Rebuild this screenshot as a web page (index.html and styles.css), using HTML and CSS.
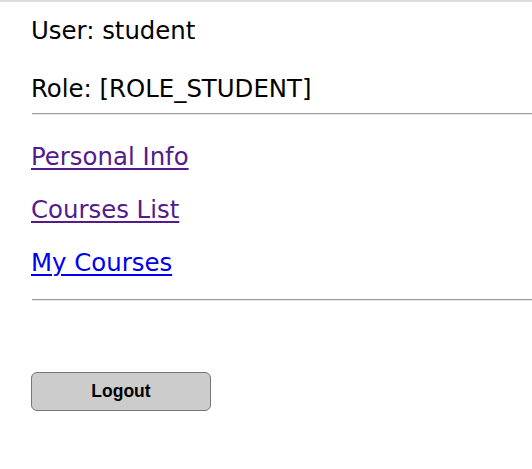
FILE: index.html
```html
<!DOCTYPE html>
<html>
<head>
<meta charset="utf-8">
<link rel="stylesheet" href="styles.css">
</head>
<body>
<div class="page">
  <p class="info user">User: student</p>
  <p class="info role">Role: [ROLE_STUDENT]</p>
  <hr class="rule rule-top">
  <nav class="links">
    <a class="link visited" href="#personal">Personal Info</a>
    <a class="link visited" href="#courses">Courses List</a>
    <a class="link" href="#my">My Courses</a>
  </nav>
  <hr class="rule rule-bottom">
  <form class="logout-form">
    <button type="button" class="logout">Logout</button>
  </form>
</div>
</body>
</html>
```
FILE: styles.css
```css
html, body {
  margin: 0;
  padding: 0;
  background: #fff;
}
body {
  border-top: 2px solid #dcdcdc;
  font-family: "DejaVu Sans", Verdana, sans-serif;
  font-size: 24.4px;
  line-height: 29px;
  color: #000;
}
.page {
  padding: 14px 0 0 31px;
}
.info {
  margin: 0;
}
.role {
  margin-top: 29px;
}
.rule {
  margin: 0 0 0 1px;
  height: 0;
  border: 0;
  border-top: 1px solid #9c9c9c;
  border-bottom: 1px solid #e6e6e6;
}
.rule-top {
  margin-top: 10px;
}
.links {
  display: flex;
  flex-direction: column;
  align-items: flex-start;
  gap: 24px;
  padding-top: 27px;
}
.link {
  color: #0000ee;
  text-decoration: underline;
  text-underline-offset: 3px;
}
.link.visited {
  color: #551a8b;
}
.rule-bottom {
  margin-top: 22px;
}
.logout-form {
  margin: 0;
  padding-top: 71px;
}
.logout {
  width: 180px;
  height: 39px;
  margin: 0;
  background: #cccccc;
  border: 1px solid #767676;
  border-radius: 6px;
  font-family: "Liberation Sans", Arial, sans-serif;
  font-weight: bold;
  font-size: 17.5px;
  color: #000;
  padding: 0;
}
```
